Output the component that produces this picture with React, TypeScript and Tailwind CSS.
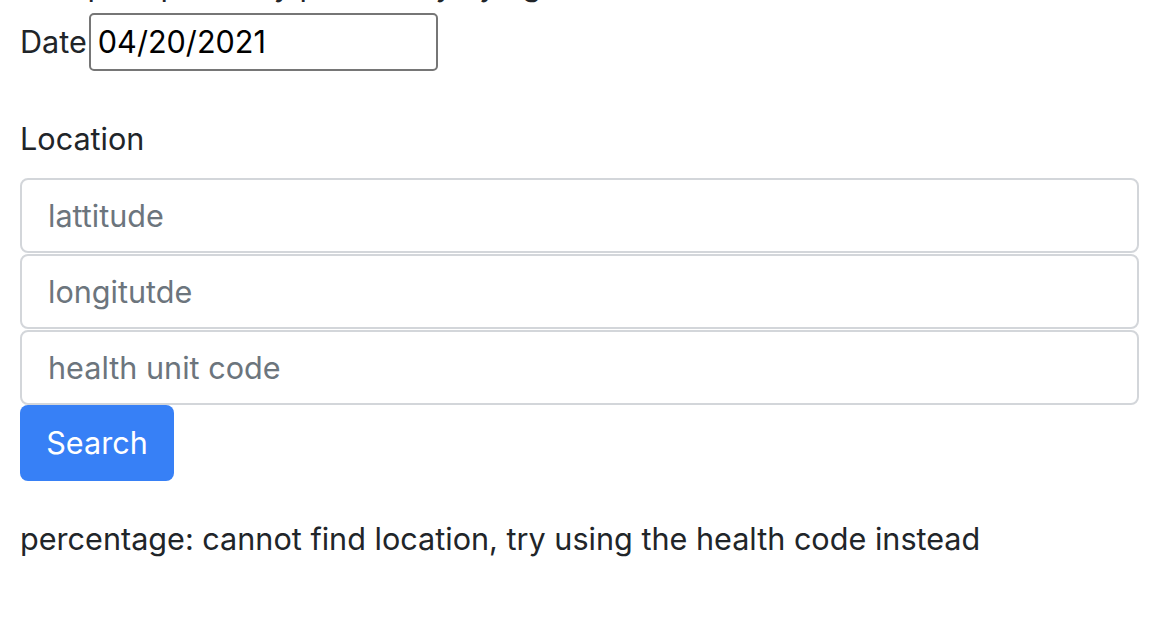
import React from "react";

export default function App() {
  const font = { fontFamily: "Inter, 'Noto Sans', sans-serif" };
  return (
    <div className="bg-white w-[1164px] h-[634px] overflow-hidden text-[#212529] text-[30.6px] leading-[46px]" style={font}>
      <div className="pl-[20px] pr-[25px]">
        <div className="-mt-[38px] h-[46px] whitespace-nowrap">Compute positivity probability by age and date</div>
        <div className="flex items-center mt-[5px] h-[58px]">
          <span>Date</span>
          <div className="ml-[2px] w-[349px] h-[58px] border-2 border-[#767676] rounded-[5px] flex items-center pl-[7px] text-black">
            04/20/2021
          </div>
        </div>
        <div className="mt-[45px] mb-[16px] h-[46px]">Location</div>
        <div className="flex flex-col gap-[1px]">
          <div className="h-[75px] border-2 border-[#d3d6da] rounded-[8px] flex items-center pl-[26px] text-[#6c757d]">lattitude</div>
          <div className="h-[75px] border-2 border-[#d3d6da] rounded-[8px] flex items-center pl-[26px] text-[#6c757d]">longitutde</div>
          <div className="h-[75px] border-2 border-[#d3d6da] rounded-[8px] flex items-center pl-[26px] text-[#6c757d]">health unit code</div>
        </div>
        <div className="w-[154px] h-[76px] bg-[#3780f6] rounded-[8px] text-white flex items-center justify-center">Search</div>
        <div className="mt-[35px] whitespace-nowrap">percentage: cannot find location, try using the health code instead</div>
      </div>
    </div>
  );
}
